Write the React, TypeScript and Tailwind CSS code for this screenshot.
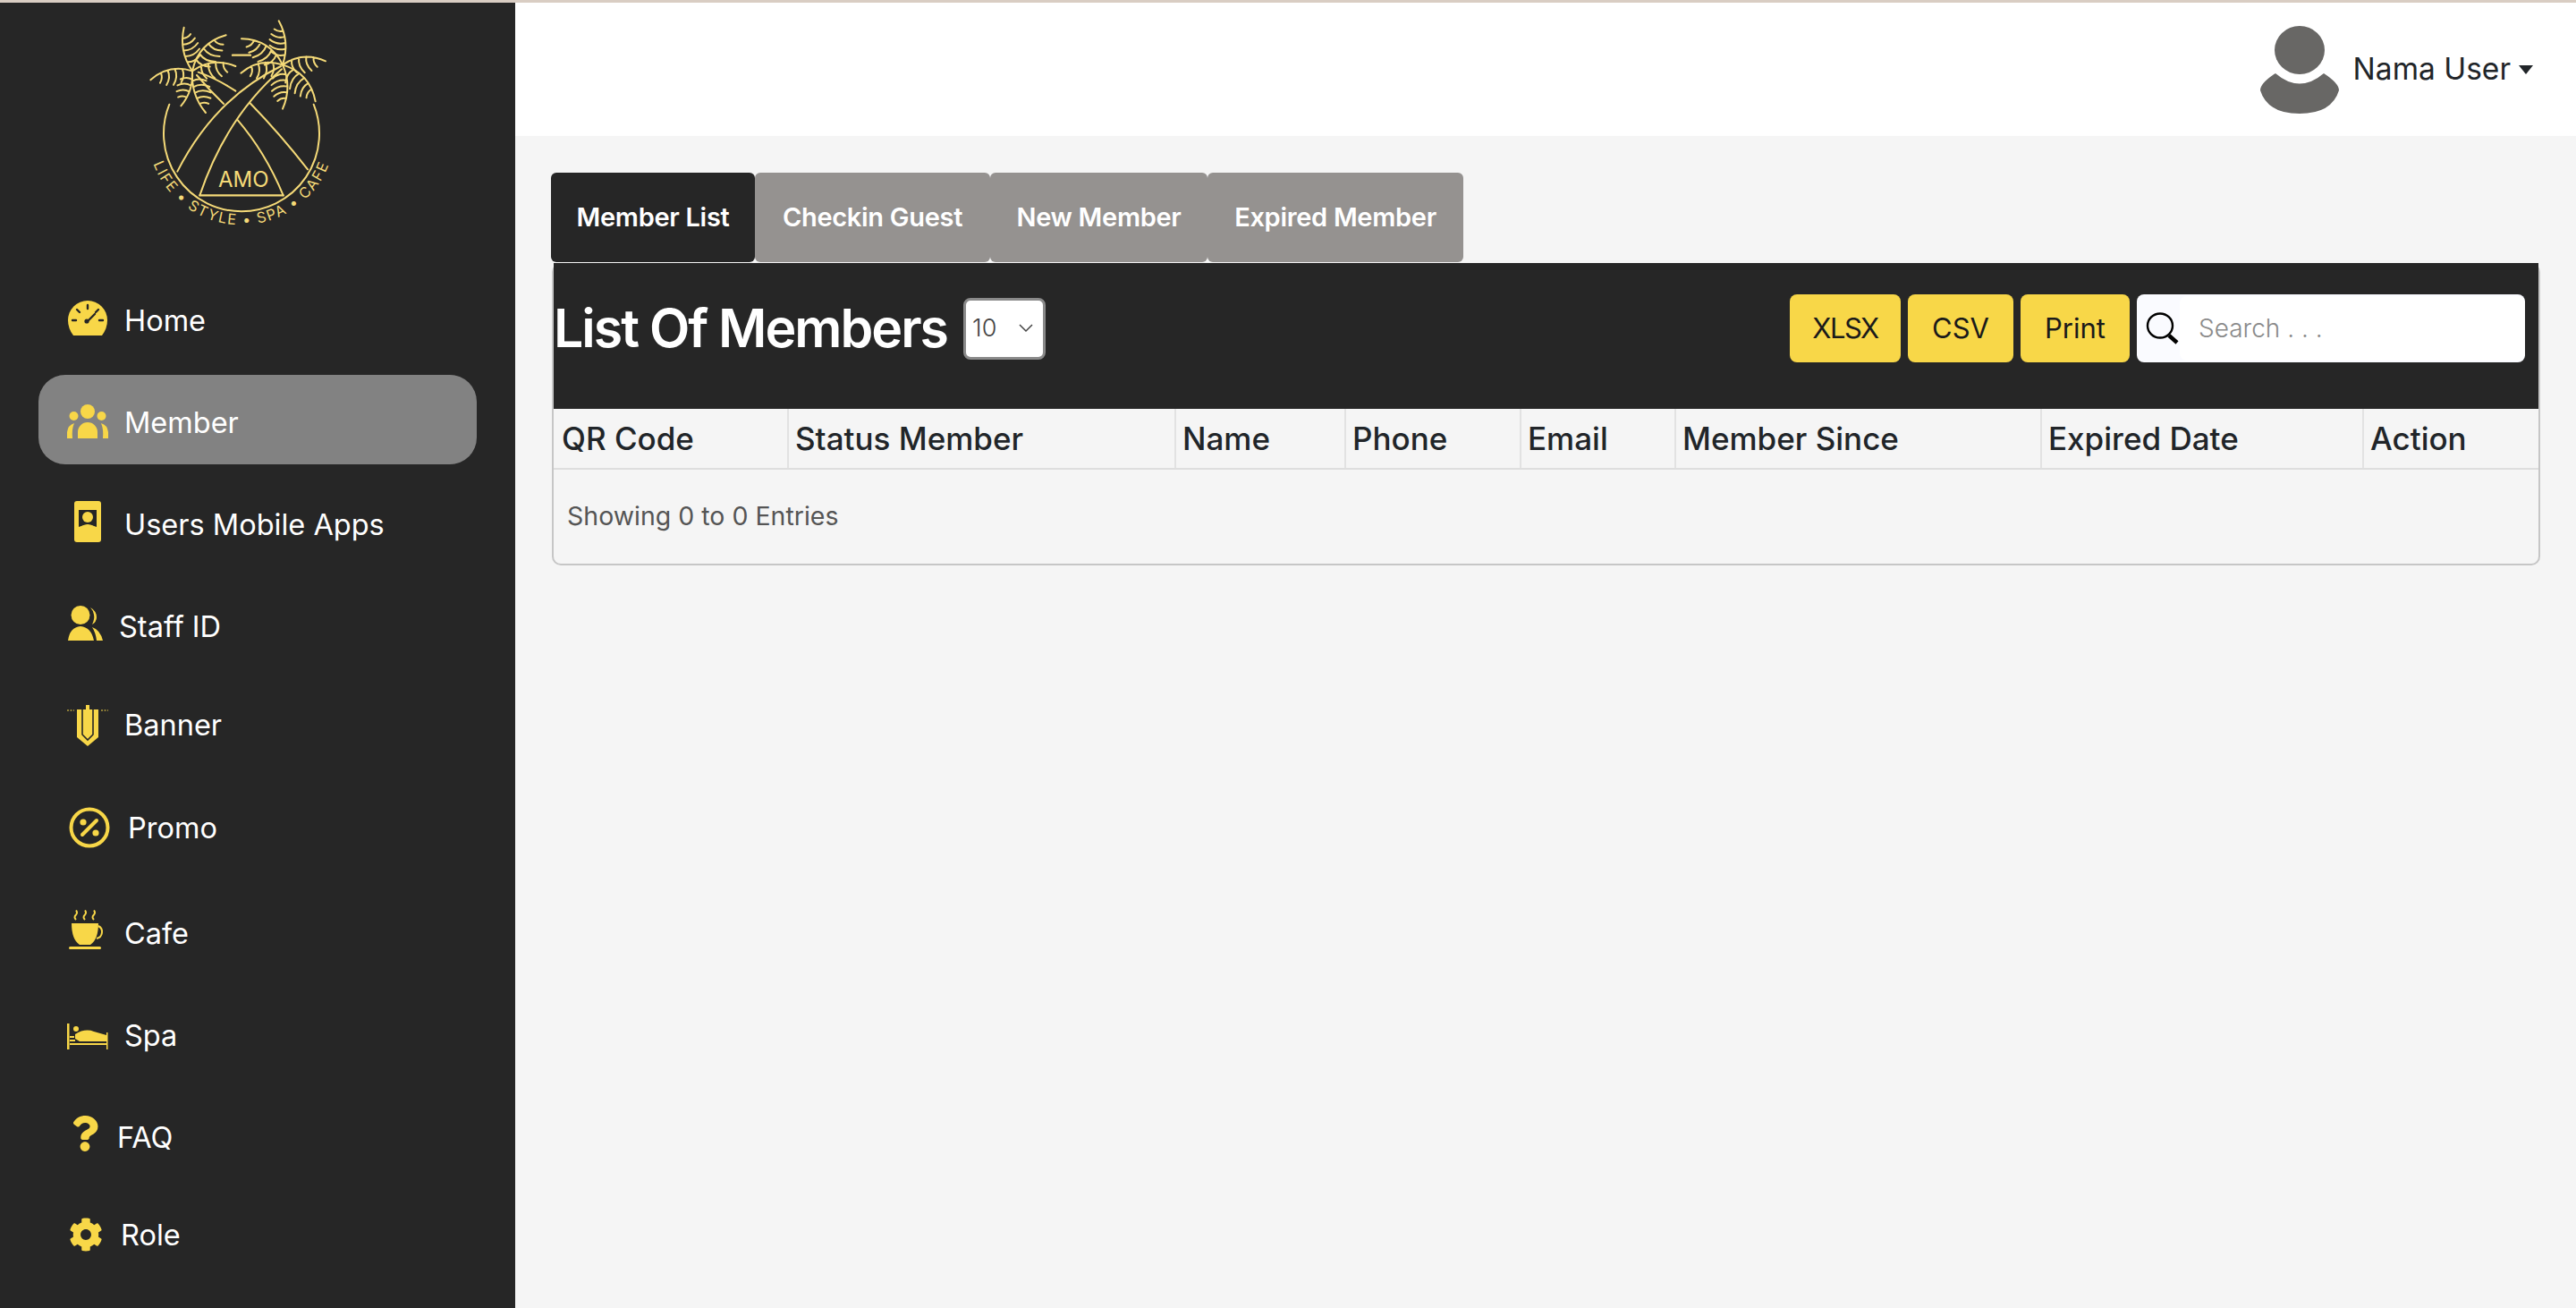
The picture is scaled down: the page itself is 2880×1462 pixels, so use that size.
import type { ReactNode } from 'react';
import { FaCog, FaQuestion } from 'react-icons/fa';

const Y = '#f8d748';
const D = '#262626';

// one palm leaf: an outer curve and ribs on its inner side
function Frond({ b, tip, bend, ribs = 5 }: { b: number[]; tip: number[]; bend: number; ribs?: number }) {
  const dx = tip[0] - b[0];
  const dy = tip[1] - b[1];
  const len = Math.hypot(dx, dy);
  const nx = -dy / len;
  const ny = dx / len;
  const cx = (b[0] + tip[0]) / 2 + nx * bend * len;
  const cy = (b[1] + tip[1]) / 2 + ny * bend * len;
  const lines: string[] = [];
  const s = bend > 0 ? -1 : 1;
  for (let i = 0; i < ribs; i++) {
    const t = 0.22 + (0.68 * i) / ribs;
    const px = (1 - t) * (1 - t) * b[0] + 2 * t * (1 - t) * cx + t * t * tip[0];
    const py = (1 - t) * (1 - t) * b[1] + 2 * t * (1 - t) * cy + t * t * tip[1];
    const w = 0.36 * len * Math.pow(Math.sin(Math.PI * Math.min(t + 0.08, 0.97)), 0.8);
    const ex = px + s * nx * w + (dx / len) * w * 0.3;
    const ey = py + s * ny * w + (dy / len) * w * 0.3;
    const qx = px + s * nx * w * 0.55 - (dx / len) * w * 0.12;
    const qy = py + s * ny * w * 0.55 - (dy / len) * w * 0.12;
    lines.push(`M${px} ${py}Q${qx} ${qy} ${ex} ${ey}`);
  }
  return <path d={`M${b[0]} ${b[1]}Q${cx} ${cy} ${tip[0]} ${tip[1]}${lines.join('')}`} />;
}

function Logo() {
  const p1 = [225, 238];
  const p2 = [528, 217];
  return (
    <svg viewBox="0 9 780 801" className="ml-[140px] h-[267px] w-[260px] shrink-0" fill="none" stroke="#f5da78" strokeWidth="6" strokeLinecap="round">
      <Frond b={p1} tip={[197, 92]} bend={-0.22} />
      <Frond b={p1} tip={[338, 118]} bend={-0.3} />
      <Frond b={p1} tip={[370, 222]} bend={-0.28} ribs={4} />
      <Frond b={p1} tip={[85, 268]} bend={0.28} ribs={4} />
      <Frond b={p1} tip={[187, 355]} bend={-0.2} ribs={4} />
      <Frond b={p1} tip={[270, 378]} bend={0.2} />
      <Frond b={p2} tip={[515, 70]} bend={0.22} />
      <Frond b={p2} tip={[390, 130]} bend={0.3} />
      <Frond b={p2} tip={[388, 245]} bend={0.28} ribs={4} />
      <Frond b={p2} tip={[672, 205]} bend={-0.28} ribs={4} />
      <Frond b={p2} tip={[638, 340]} bend={-0.3} />
      <Frond b={p2} tip={[528, 365]} bend={-0.22} />
      <path d="M148 350A261 261 0 1 0 632 350" />
      <path d="M522 222Q300 330 175 575M525 232Q340 390 250 655M240 252Q280 300 330 348M375 400Q470 510 530 655M245 242Q310 265 370 305M418 345Q520 450 612 568" />
      <path d="M250 655H530M360 185H420" strokeWidth="7" />
      <text x="397" y="627" textAnchor="middle" fill="#f5da78" stroke="none" fontSize="72" fontFamily="Inter, sans-serif">AMO</text>
      <path id="logoArc" d="M74 439A315 315 0 0 0 704 439" stroke="none" />
      <text fill="#f5da78" stroke="none" fontSize="49" fontFamily="Inter, sans-serif" letterSpacing="5">
        <textPath href="#logoArc" startOffset="50%" textAnchor="middle">LIFE • STYLE • SPA • CAFE</textPath>
      </text>
    </svg>
  );
}

const GaugeIcon = () => (
  <svg viewBox="0 0 44 39" className="h-full w-full">
    <path d="M6 39Q0 31 0 22A22 22 0 0 1 44 22Q44 31 38 39Z" fill={Y} />
    <path d="M22 5V9M10 10L13 13M34 10L31 13M5 22H9M39 22H35M21 24L30 15" stroke={D} strokeWidth="2.4" strokeLinecap="round" />
    <circle cx="21" cy="23" r="2.6" fill={D} />
  </svg>
);

const MemberIcon = () => (
  <svg viewBox="0 0 46 38" className="h-full w-full" fill={Y}>
    <circle cx="23" cy="8" r="8" />
    <circle cx="7.5" cy="13" r="5" />
    <circle cx="38.5" cy="13" r="5" />
    <path d="M12 38V31A11 11 0 0 1 34 31V38ZM0 38V31Q1 23 8 21Q5 28 6 38ZM46 38V31Q45 23 38 21Q41 28 40 38Z" />
  </svg>
);

const PhoneIcon = () => (
  <svg viewBox="0 0 30 46" className="h-full w-full">
    <rect width="30" height="46" rx="3" fill={Y} />
    <path d="M5 10H25V29Q15 24 5 29Z" fill={D} />
    <circle cx="15" cy="18" r="6" fill={Y} />
    <path d="M7 29Q15 23 23 29V30H7Z" fill={Y} />
  </svg>
);

const StaffIcon = () => (
  <svg viewBox="0 0 39 39" className="h-full w-full" fill={Y}>
    <circle cx="14" cy="10.5" r="10.5" />
    <path d="M0 39Q2 24 14 23Q26 24 29 39ZM25 2Q32 6 32 13Q32 18 27 21Q30 15 29 10Q28 5 25 2ZM27 24Q36 27 39 39H32Q31 30 27 24Z" />
  </svg>
);

const BannerIcon = () => (
  <svg viewBox="0 0 46 46" className="h-full w-full">
    <path d="M0 6H8M38 6H46" stroke={Y} strokeWidth="1.2" strokeDasharray="2 1.5" />
    <rect x="21" y="0" width="4" height="5" fill={Y} />
    <path d="M11 5H35V36L23 46L11 36Z" fill={Y} />
    <path d="M17 5V33L23 39L29 33V5" fill="none" stroke={D} strokeWidth="1.6" />
  </svg>
);

const PromoIcon = () => (
  <svg viewBox="0 0 46 46" className="h-full w-full">
    <circle cx="23" cy="23" r="20.5" fill="none" stroke={Y} strokeWidth="4" />
    <path d="M15 31L31 15" stroke={Y} strokeWidth="4" strokeLinecap="round" />
    <circle cx="16" cy="17" r="3.6" fill={Y} />
    <circle cx="30" cy="29" r="3.6" fill={Y} />
  </svg>
);

const CupIcon = () => (
  <svg viewBox="0 0 42 44" className="h-full w-full">
    <path d="M8 11Q5 8 8 5.500Q10 3 8 0.500M18 11Q15 8 18 5.500Q20 3 18 0.500M28 11Q25 8 28 5.500Q30 3 28 0.500" fill="none" stroke={Y} strokeWidth="2" />
    <path d="M3 15H33Q33 33 24 39H12Q3 33 3 15Z" fill={Y} />
    <path d="M33 18A7.500 7.500 0 0 1 31 32" fill="none" stroke={Y} strokeWidth="2" />
    <rect x="0" y="41" width="36" height="3" rx="1.5" fill={Y} />
  </svg>
);

const BedIcon = () => (
  <svg viewBox="0 0 46 29" className="h-full w-full" fill={Y}>
    <rect width="2.500" height="29" />
    <rect x="44" y="10" width="1.500" height="19" />
    <circle cx="10" cy="6" r="3" />
    <path d="M9 12Q20 5 30 9L44 13V20H14L9 17ZM3 14H8V16H3ZM3 18H9V20H3ZM3 22H44V24H3Z" />
  </svg>
);

const SearchIcon = () => (
  <svg viewBox="0 0 40 36" className="h-[36px] w-[40px]" fill="none" stroke="#000">
    <ellipse cx="18" cy="15" rx="14" ry="13.500" strokeWidth="2.400" />
    <path d="M28 26L37 34" strokeWidth="4.500" />
  </svg>
);

const Avatar = () => (
  <svg viewBox="0 0 88 98" className="h-[98px] w-[88px]">
    <ellipse cx="44" cy="27" rx="28" ry="27" fill="#686765" />
    <path d="M17 53Q44 76 71 53Q88 64 88 72Q80 98 44 98Q8 98 0 72Q0 64 17 53Z" fill="#686765" />
  </svg>
);

interface NavItem {
  label: string;
  icon: ReactNode;
  row: string;
  box: string;
  text: string;
}

const navItems: NavItem[] = [
  { label: 'Home', icon: <GaugeIcon />, row: 'mt-[38px]', box: 'ml-px mb-[5px] h-[39px] w-[44px]', text: 'ml-[19px]' },
  { label: 'Member', icon: <MemberIcon />, row: 'mt-[11px] bg-[#828282]', box: 'h-[38px] w-[46px] mt-[3px]', text: 'ml-[18px] mt-[6px]' },
  { label: 'Users Mobile Apps', icon: <PhoneIcon />, row: 'mt-[17px]', box: 'ml-[8px] mb-[6px] h-[46px] w-[30px]', text: 'ml-[26px]' },
  { label: 'Staff ID', icon: <StaffIcon />, row: 'mt-[14px]', box: 'ml-px mb-[8px] h-[39px] w-[39px]', text: 'ml-[18px]' },
  { label: 'Banner', icon: <BannerIcon />, row: 'mt-[10px]', box: 'mt-[2px] h-[46px] w-[46px]', text: 'ml-[18px]' },
  { label: 'Promo', icon: <PromoIcon />, row: 'mt-[15px]', box: 'ml-[2px] h-[46px] w-[46px]', text: 'ml-[20px]' },
  { label: 'Cafe', icon: <CupIcon />, row: 'mt-[18px]', box: 'ml-[2px] mb-[8px] h-[44px] w-[42px]', text: 'ml-[20px]' },
  { label: 'Spa', icon: <BedIcon />, row: 'mt-[14px]', box: 'mt-[2px] h-[29px] w-[46px]', text: 'ml-[18px]' },
  { label: 'FAQ', icon: <FaQuestion className="h-full w-full" color={Y} />, row: 'mt-[14px]', box: 'ml-[5px] mb-[8px] h-[42px] w-[30px]', text: 'ml-[21px]' },
  { label: 'Role', icon: <FaCog className="h-full w-full" color={Y} />, row: 'mt-[9px]', box: 'ml-[2px] h-[40px] w-[38px]', text: 'ml-[20px]' },
];

const tabs = [
  { label: 'Member List', cls: 'w-[228px] bg-[#262626]' },
  { label: 'Checkin Guest', cls: 'w-[263px] bg-[#959290]' },
  { label: 'New Member', cls: 'w-[243px] bg-[#959290]' },
  { label: 'Expired Member', cls: 'w-[286px] bg-[#959290]' },
];

const columns = ['QR Code', 'Status Member', 'Name', 'Phone', 'Email', 'Member Since', 'Expired Date', 'Action'];

const exportButtons = [
  { label: 'XLSX', cls: 'w-[124px] tracking-[-1.5px]' },
  { label: 'CSV', cls: 'w-[118px]' },
  { label: 'Print', cls: 'w-[122px]' },
];

export default function App() {
  return (
    <div className="flex h-[1462px] w-full flex-col overflow-hidden bg-[#f5f5f5] font-[Inter,sans-serif]">
      <div className="h-[3px] shrink-0 bg-[#d9cdc3]" />
      <div className="flex min-h-0 flex-1">
        <aside className="w-[576px] shrink-0 bg-[#262626]">
          <Logo />
          <nav className="flex flex-col">
            {navItems.map((item) => (
              <a key={item.label} className={`mx-[43px] flex h-[100px] items-center rounded-[30px] pl-[32px] ${item.row}`}>
                <span className={`block shrink-0 ${item.box}`}>{item.icon}</span>
                <span className={`pt-[2px] text-[32.5px] leading-none text-white ${item.text}`}>{item.label}</span>
              </a>
            ))}
          </nav>
        </aside>

        <main className="min-w-0 flex-1">
          <header className="flex h-[149px] items-center justify-end bg-white pr-[48px]">
            <Avatar />
            <span className="ml-[16px] text-[33.5px] leading-none text-[#212529]">Nama User</span>
            <span className="ml-[9px] h-0 w-0 border-x-[8px] border-t-[10px] border-x-transparent border-t-[#212529]" />
          </header>

          <div className="pl-[40px] pr-[40px] pt-[41px]">
            <div className="flex h-[100px]">
              {tabs.map((tab) => (
                <button key={tab.label} className={`rounded-[6px] text-[29px] font-semibold tracking-[-0.3px] text-white ${tab.cls}`}>
                  {tab.label}
                </button>
              ))}
            </div>

            <section className="ml-px mt-px h-[338px] rounded-[10px] border-2 border-t-0 border-[#c6c6c6]">
              <div className="flex h-[163px] items-start justify-between border-t-2 border-[#262626] bg-[#262626] pr-[15px]">
                <div className="flex items-center pt-[36px]">
                  <h1 className="text-[59px] font-semibold leading-[70px] tracking-[-2px] text-white">List Of Members</h1>
                  <div className="relative ml-[18px]">
                    <select className="h-[69px] w-[92px] appearance-none rounded-[8px] border-[3px] border-[#8a8a8a] bg-white pl-[7px] text-[27px] font-light text-[#444]">
                      <option>10</option>
                    </select>
                    <svg viewBox="0 0 16 10" className="absolute right-[14px] top-[29px] h-[10px] w-[16px]" fill="none" stroke="#444" strokeWidth="1.500">
                      <path d="M1 1L8 8L15 1" />
                    </svg>
                  </div>
                </div>
                <div className="flex gap-[8px] pt-[33px]">
                  {exportButtons.map((btn) => (
                    <button key={btn.label} className={`h-[76px] rounded-[8px] bg-[#f8d748] text-[31px] text-[#1a1a1a] ${btn.cls}`}>
                      {btn.label}
                    </button>
                  ))}
                  <div className="flex h-[76px] w-[434px] items-center rounded-[8px] bg-[#fafbff] pl-[8px]">
                    <SearchIcon />
                    <input
                      placeholder="Search . . ."
                      className="h-[72px] min-w-0 flex-1 rounded-[8px] bg-white pl-[21px] text-[28px] font-light outline-none placeholder:text-[#8a8a8a]"
                    />
                  </div>
                </div>
              </div>

              <div className="grid h-[68px] grid-cols-[261px_433px_190px_196px_173px_409px_360px_1fr] border-b-2 border-[#dedede]">
                {columns.map((col, i) => (
                  <div
                    key={col}
                    className={`flex items-center text-[35px] font-medium leading-none text-[#212529] ${i > 0 ? 'border-l-2 border-[#e2e2e2] pl-[7px]' : 'pl-[9px]'}`}
                  >
                    {col}
                  </div>
                ))}
              </div>

              <p className="pl-[15px] pt-[38px] text-[28.5px] leading-none text-[#555]">Showing 0 to 0 Entries</p>
            </section>
          </div>
        </main>
      </div>
    </div>
  );
}
